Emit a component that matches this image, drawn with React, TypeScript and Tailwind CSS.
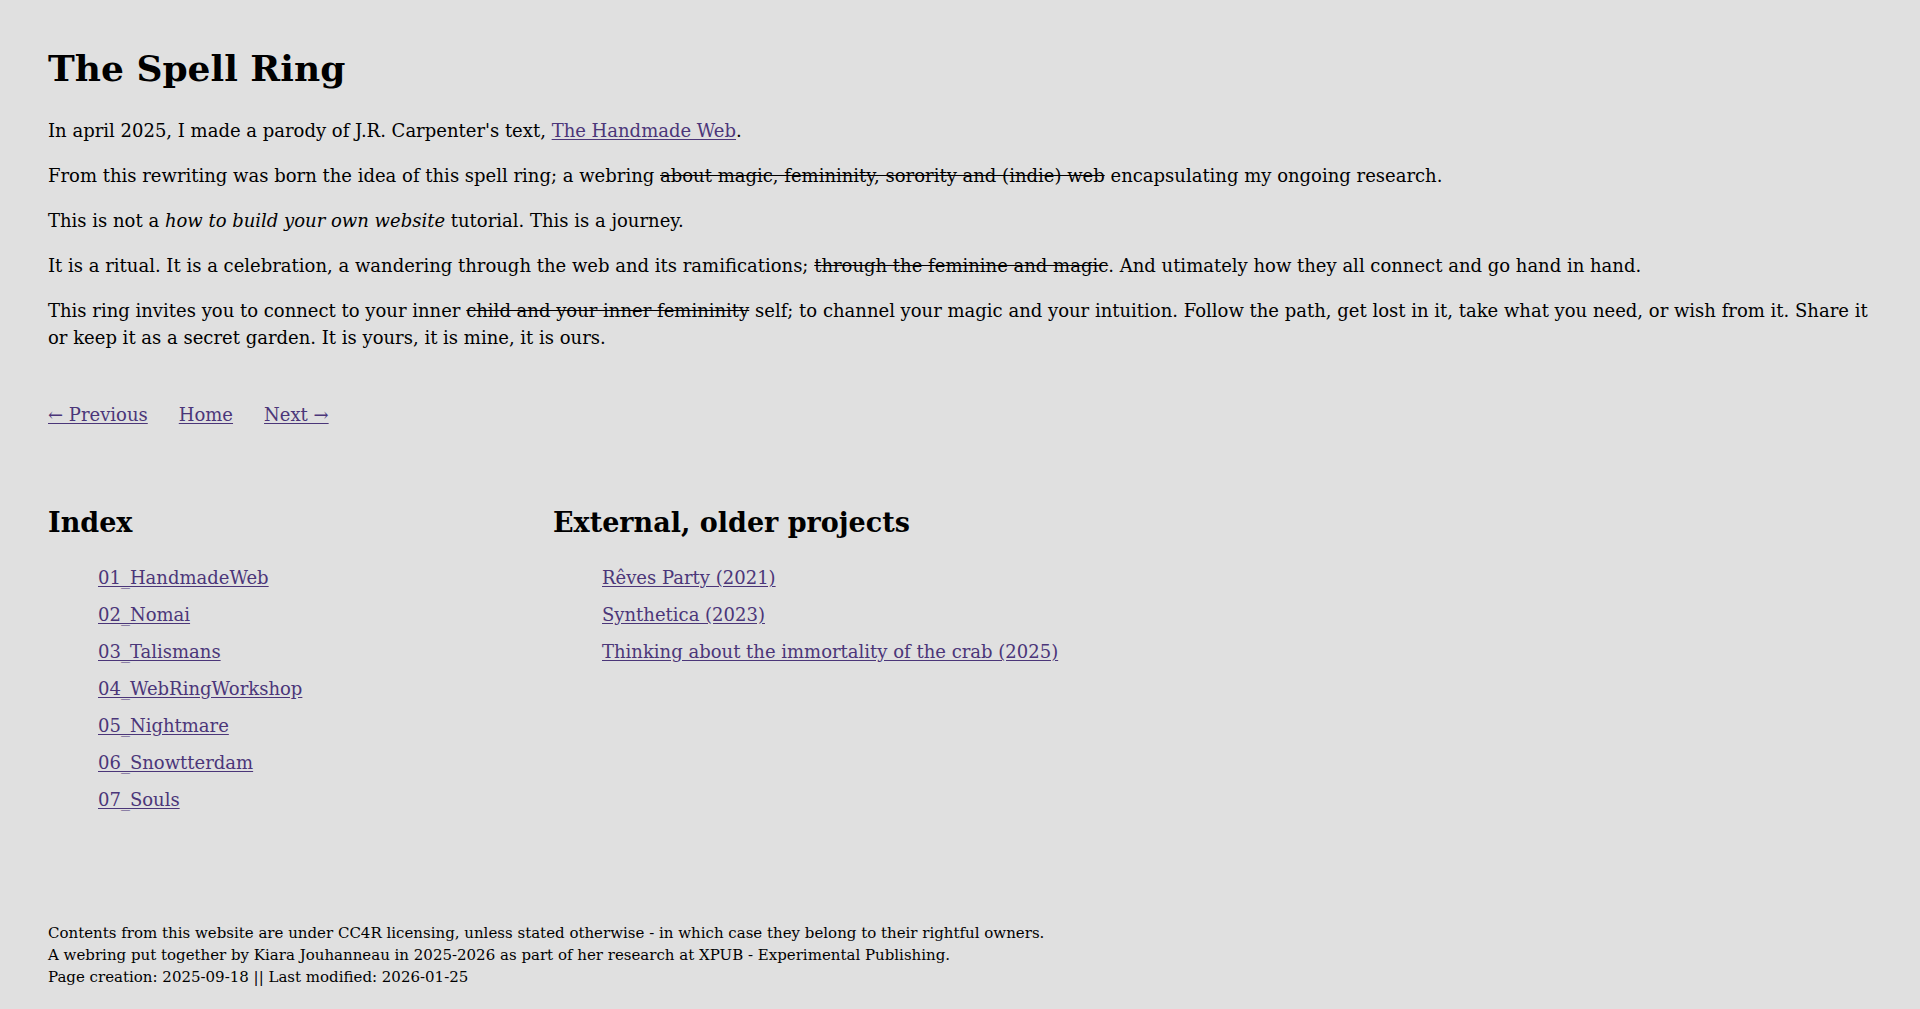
const indexLinks = [
  '01_HandmadeWeb',
  '02_Nomai',
  '03_Talismans',
  '04_WebRingWorkshop',
  '05_Nightmare',
  '06_Snowtterdam',
  '07_Souls',
]

const olderProjects = [
  'Rêves Party (2021)',
  'Synthetica (2023)',
  'Thinking about the immortality of the crab (2025)',
]

const link = 'text-[#4b3679] underline underline-offset-[2px]'

export default function App() {
  return (
    <div className="min-h-screen bg-[#e0e0e0] text-black font-['DejaVu_Serif','Liberation_Serif',serif] text-[18px] leading-[27px]">
      <div className="px-[48px] pt-[47px] pb-[22px]">

        {/* Title */}
        <h1 className="text-[36px] leading-[43px] font-bold mb-[27px]">The Spell Ring</h1>

        {/* Intro */}
        <div className="flex flex-col gap-[18px]">
          <p>
            In april 2025, I made a parody of J.R. Carpenter's text,{' '}
            <a href="#" className={link}>The Handmade Web</a>.
          </p>
          <p>
            From this rewriting was born the idea of this spell ring; a webring{' '}
            <span className="line-through">about magic, femininity, sorority and (indie) web</span>{' '}
            encapsulating my ongoing research.
          </p>
          <p>
            This is not a <em>how to build your own website</em> tutorial. This is a journey.
          </p>
          <p>
            It is a ritual. It is a celebration, a wandering through the web and its ramifications;{' '}
            <span className="line-through">through the feminine and magic</span>. And utimately how they
            all connect and go hand in hand.
          </p>
          <p>
            This ring invites you to connect to your inner{' '}
            <span className="line-through">child and your inner femininity</span> self; to channel your
            magic and your intuition. Follow the path, get lost in it, take what you need, or wish from
            it. Share it or keep it as a secret garden. It is yours, it is mine, it is ours.
          </p>
        </div>

        {/* Nav */}
        <nav className="flex gap-[31px] mt-[50px]">
          <a href="#" className={link}>← Previous</a>
          <a href="#" className={link}>Home</a>
          <a href="#" className={link}>Next →</a>
        </nav>

        {/* Index columns */}
        <div className="flex mt-[78px]">
          <section className="w-[505px] shrink-0">
            <h2 className="text-[27px] leading-[34px] font-bold mb-[24px]">Index</h2>
            <ul className="pl-[50px] flex flex-col gap-[10px]">
              {indexLinks.map((item) => (
                <li key={item}>
                  <a href="#" className={link}>{item}</a>
                </li>
              ))}
            </ul>
          </section>
          <section>
            <h2 className="text-[27px] leading-[34px] font-bold mb-[24px]">External, older projects</h2>
            <ul className="pl-[49px] flex flex-col gap-[10px]">
              {olderProjects.map((item) => (
                <li key={item}>
                  <a href="#" className={link}>{item}</a>
                </li>
              ))}
            </ul>
          </section>
        </div>

        {/* Footer */}
        <footer className="mt-[109px] text-[15px] leading-[22px]">
          <p>Contents from this website are under CC4R licensing, unless stated otherwise - in which case they belong to their rightful owners.</p>
          <p>A webring put together by Kiara Jouhanneau in 2025-2026 as part of her research at XPUB - Experimental Publishing.</p>
          <p>Page creation: 2025-09-18 || Last modified: 2026-01-25</p>
        </footer>

      </div>
    </div>
  )
}
